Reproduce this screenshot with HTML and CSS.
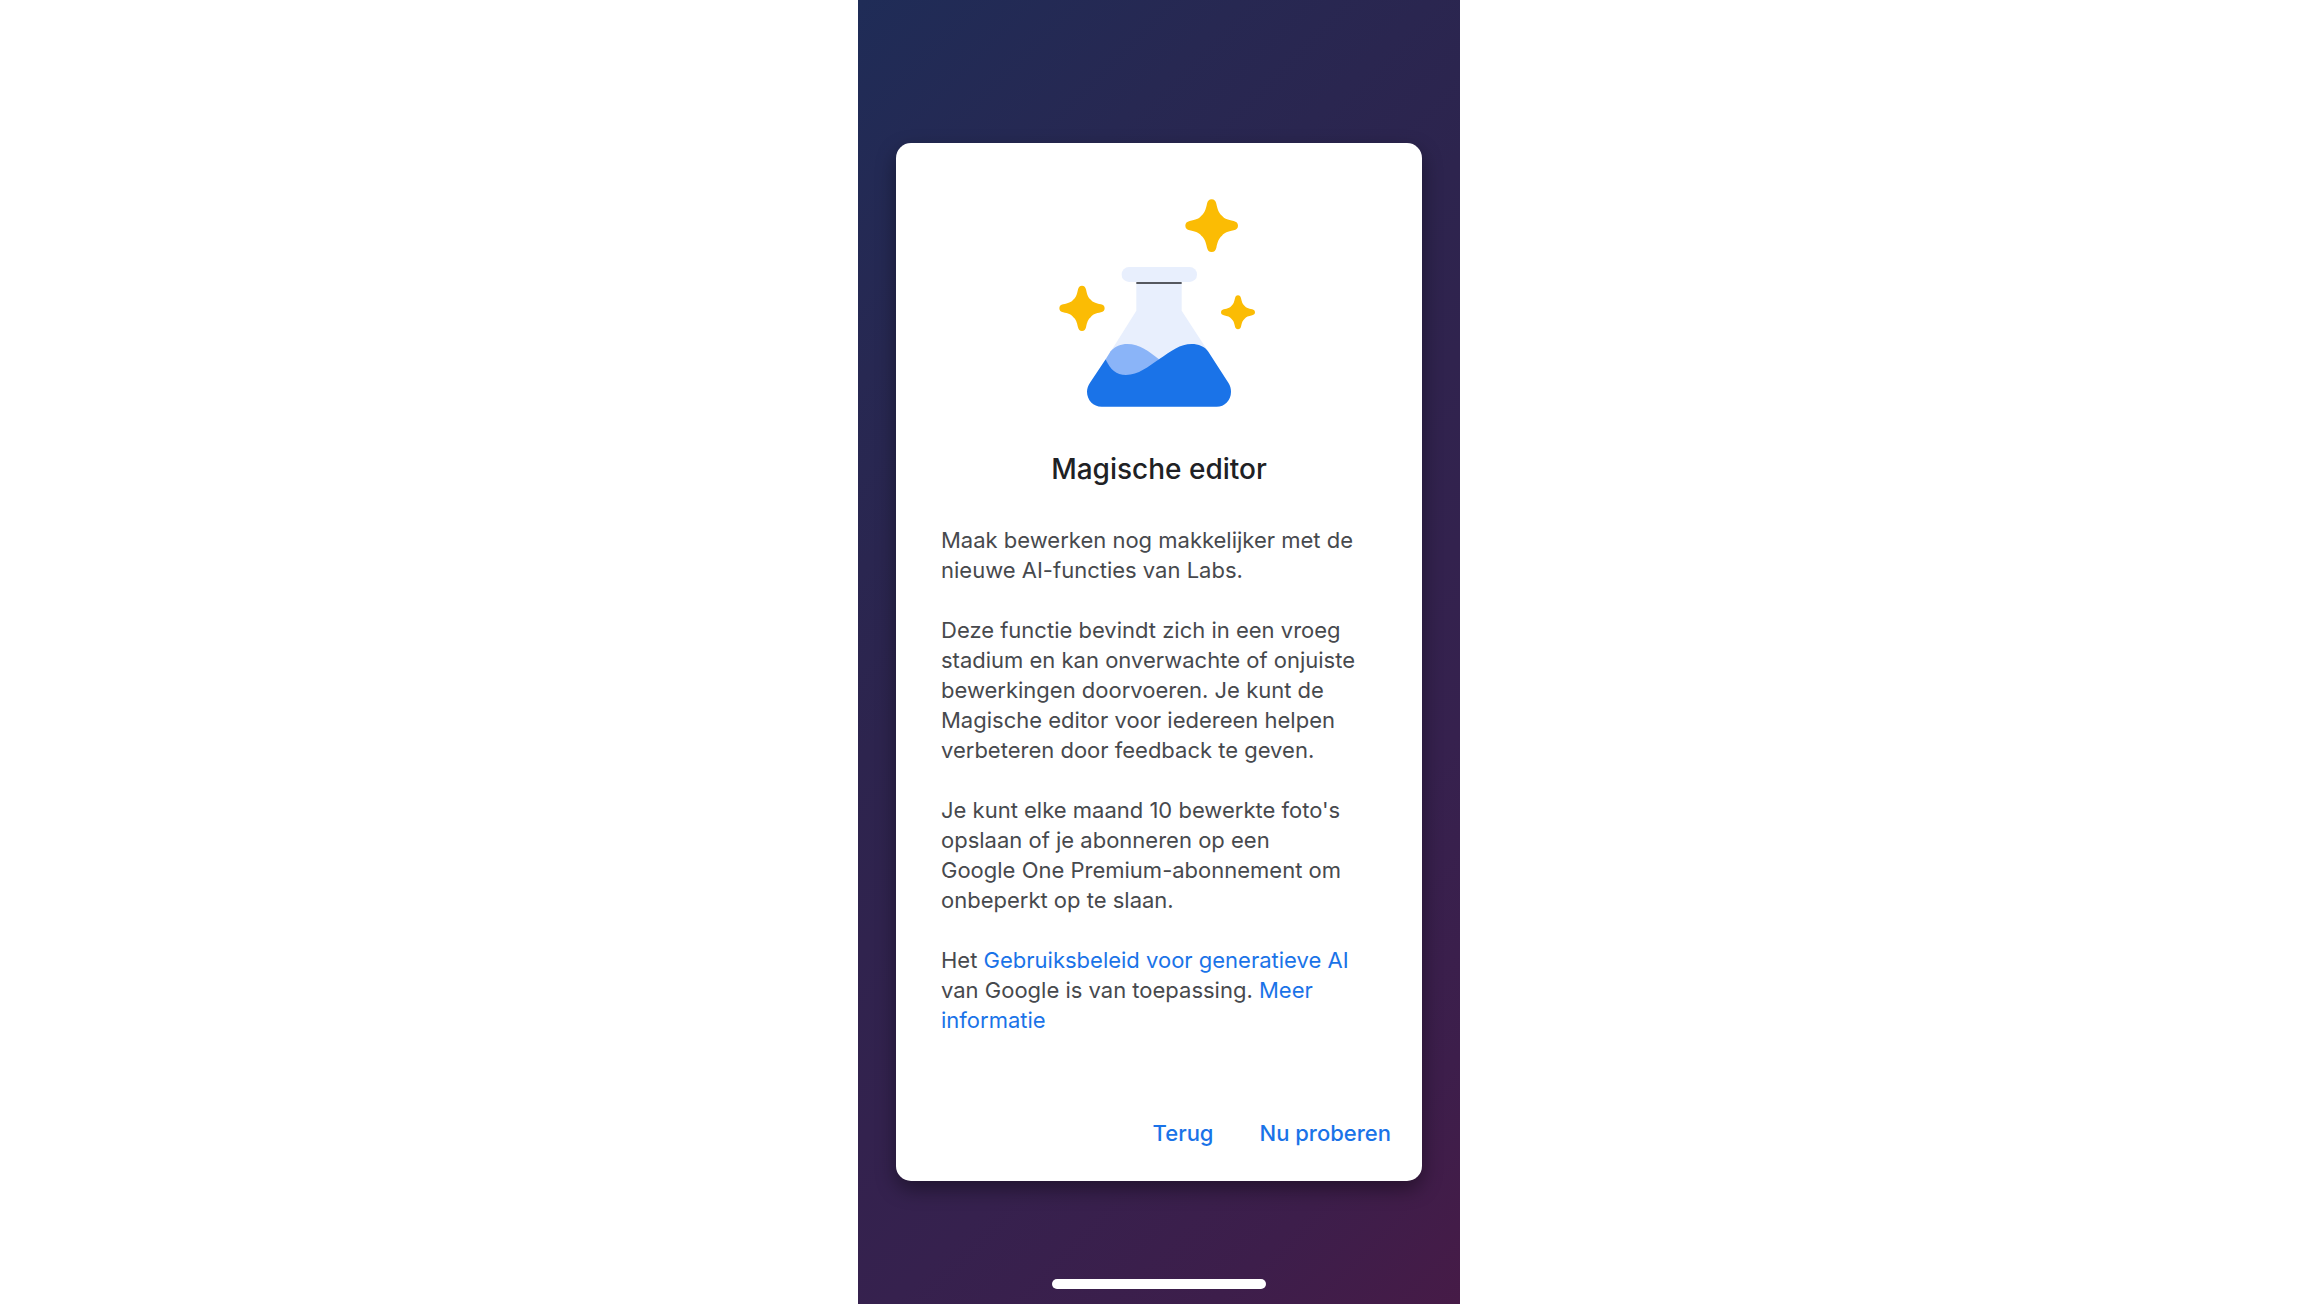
FILE: index.html
```html
<!DOCTYPE html>
<html lang="nl">

<head>
    <meta charset="UTF-8">
    <meta name="viewport" content="width=device-width, initial-scale=1.0">
    <title>Magische editor</title>
    <link rel="stylesheet" href="styles.css">
</head>

<body>

    <div class="phone">
        <main class="card">
            <svg class="flask" viewBox="-3 0 720 720" aria-hidden="true">
                <defs>
                    <path id="star" d="M0-79C8-79 12-74 14-66C18-48 21-38 31-30C38-21 48-18 66-14C74-12 79-8 79 0C79 8 74 12 66 14C48 18 38 21 31 30C21 38 18 48 14 66C12 74 8 79 0 79C-8 79-12 74-14 66C-18 48-21 38-31 30C-38 21-48 18-66 14C-74 12-79 8-79 0C-79-8-74-12-66-14C-48-18-38-21-31-30C-21-38-18-48-14-66C-12-74-8-79 0-79Z" />
                </defs>

                <!-- stars -->
                <g fill="#fbbc04">
                    <use href="#star" transform="translate(515 137)" />
                    <use href="#star" transform="translate(126 385) scale(.86)" />
                    <use href="#star" transform="translate(594 397) scale(.645)" />
                </g>

                <!-- glass -->
                <rect x="245" y="261" width="226" height="45" rx="22" fill="#e8effd" />
                <path fill="#e8effd" d="M289 308H425V392L505 515L357 600L200 534L289 392Z" />
                <path fill="#55585f" d="M289 306H425V312H289Z" />

                <!-- liquid -->
                <path fill="#8ab4f8" d="M197 538L212 514C225 498 243 492 262 492C298 492 328 515 357 538L300 600H220Z" />
                <path fill="#1a73e8" d="M197 538C212 570 228 585 258 585C295 585 325 560 357 538C395 512 420 492 455 492C475 492 495 500 505 515L565 608C571 617 573 626 573 635C573 661 554 680 530 680H185C160 680 141 660 141 635C141 626 144 617 150 608Z" />
            </svg>

            <h1>Magische editor</h1>

            <div class="text">
                <p>Maak bewerken nog makkelijker met de nieuwe AI-functies van Labs.</p>
                <p>Deze functie bevindt zich in een vroeg stadium en kan onverwachte of onjuiste bewerkingen doorvoeren. Je kunt de Magische editor voor iedereen helpen verbeteren door feedback te geven.</p>
                <p>Je kunt elke maand 10 bewerkte foto's opslaan of je abonneren op een Google&nbsp;One Premium-abonnement om onbeperkt op te slaan.</p>
                <p>Het <a href="#">Gebruiksbeleid voor generatieve AI</a> van Google is van toepassing. <a href="#">Meer informatie</a></p>
            </div>

            <div class="actions">
                <button type="button">Terug</button>
                <button type="button">Nu proberen</button>
            </div>
        </main>

        <div class="home-bar"></div>
    </div>

</body>

</html>
```
FILE: styles.css
```css
* {
    box-sizing: border-box;
}

body {
    margin: 0;
    background-color: white;
    font-family: Inter, "Liberation Sans", sans-serif;
}

.phone {
    display: flex;
    flex-direction: column;
    align-items: center;
    max-width: 602px;
    min-height: 100vh;
    margin: 0 auto;
    padding: 143px 38px 15px;
    background: linear-gradient(135deg, #1f2c57 0%, #272852 20%, #2d244e 40%, #36214e 70%, #3d1e4b 87%, #461b47 100%);
}

.card {
    display: flex;
    flex-direction: column;
    width: 100%;
    padding: 37px 16px 25px;
    border-radius: 15px;
    background-color: white;
    box-shadow: 0 8px 20px rgba(0, 0, 0, 0.4);
}

.flask {
    width: 240px;
    height: 240px;
    align-self: center;
}

h1 {
    margin: 32px 0 0;
    color: #202124;
    font-size: 28px;
    font-weight: 500;
    line-height: 34px;
    text-align: center;
}

.text {
    display: flex;
    flex-direction: column;
    gap: 30px;
    margin: 39px 29px 0;
    color: #47494d;
    font-size: 22px;
    line-height: 30px;
}

.text p {
    margin: 0;
}

a {
    color: #1a73e8;
    text-decoration: none;
}

.actions {
    display: flex;
    justify-content: flex-end;
    gap: 16px;
    margin-top: 75px;
}

.actions button {
    padding: 8px 15px;
    border: 0;
    background: none;
    color: #1a73e8;
    font-family: inherit;
    font-size: 22px;
    font-weight: 500;
    line-height: 30px;
    cursor: pointer;
}

.home-bar {
    width: 214px;
    height: 10px;
    margin-top: auto;
    border-radius: 5px;
    background-color: white;
}
```
